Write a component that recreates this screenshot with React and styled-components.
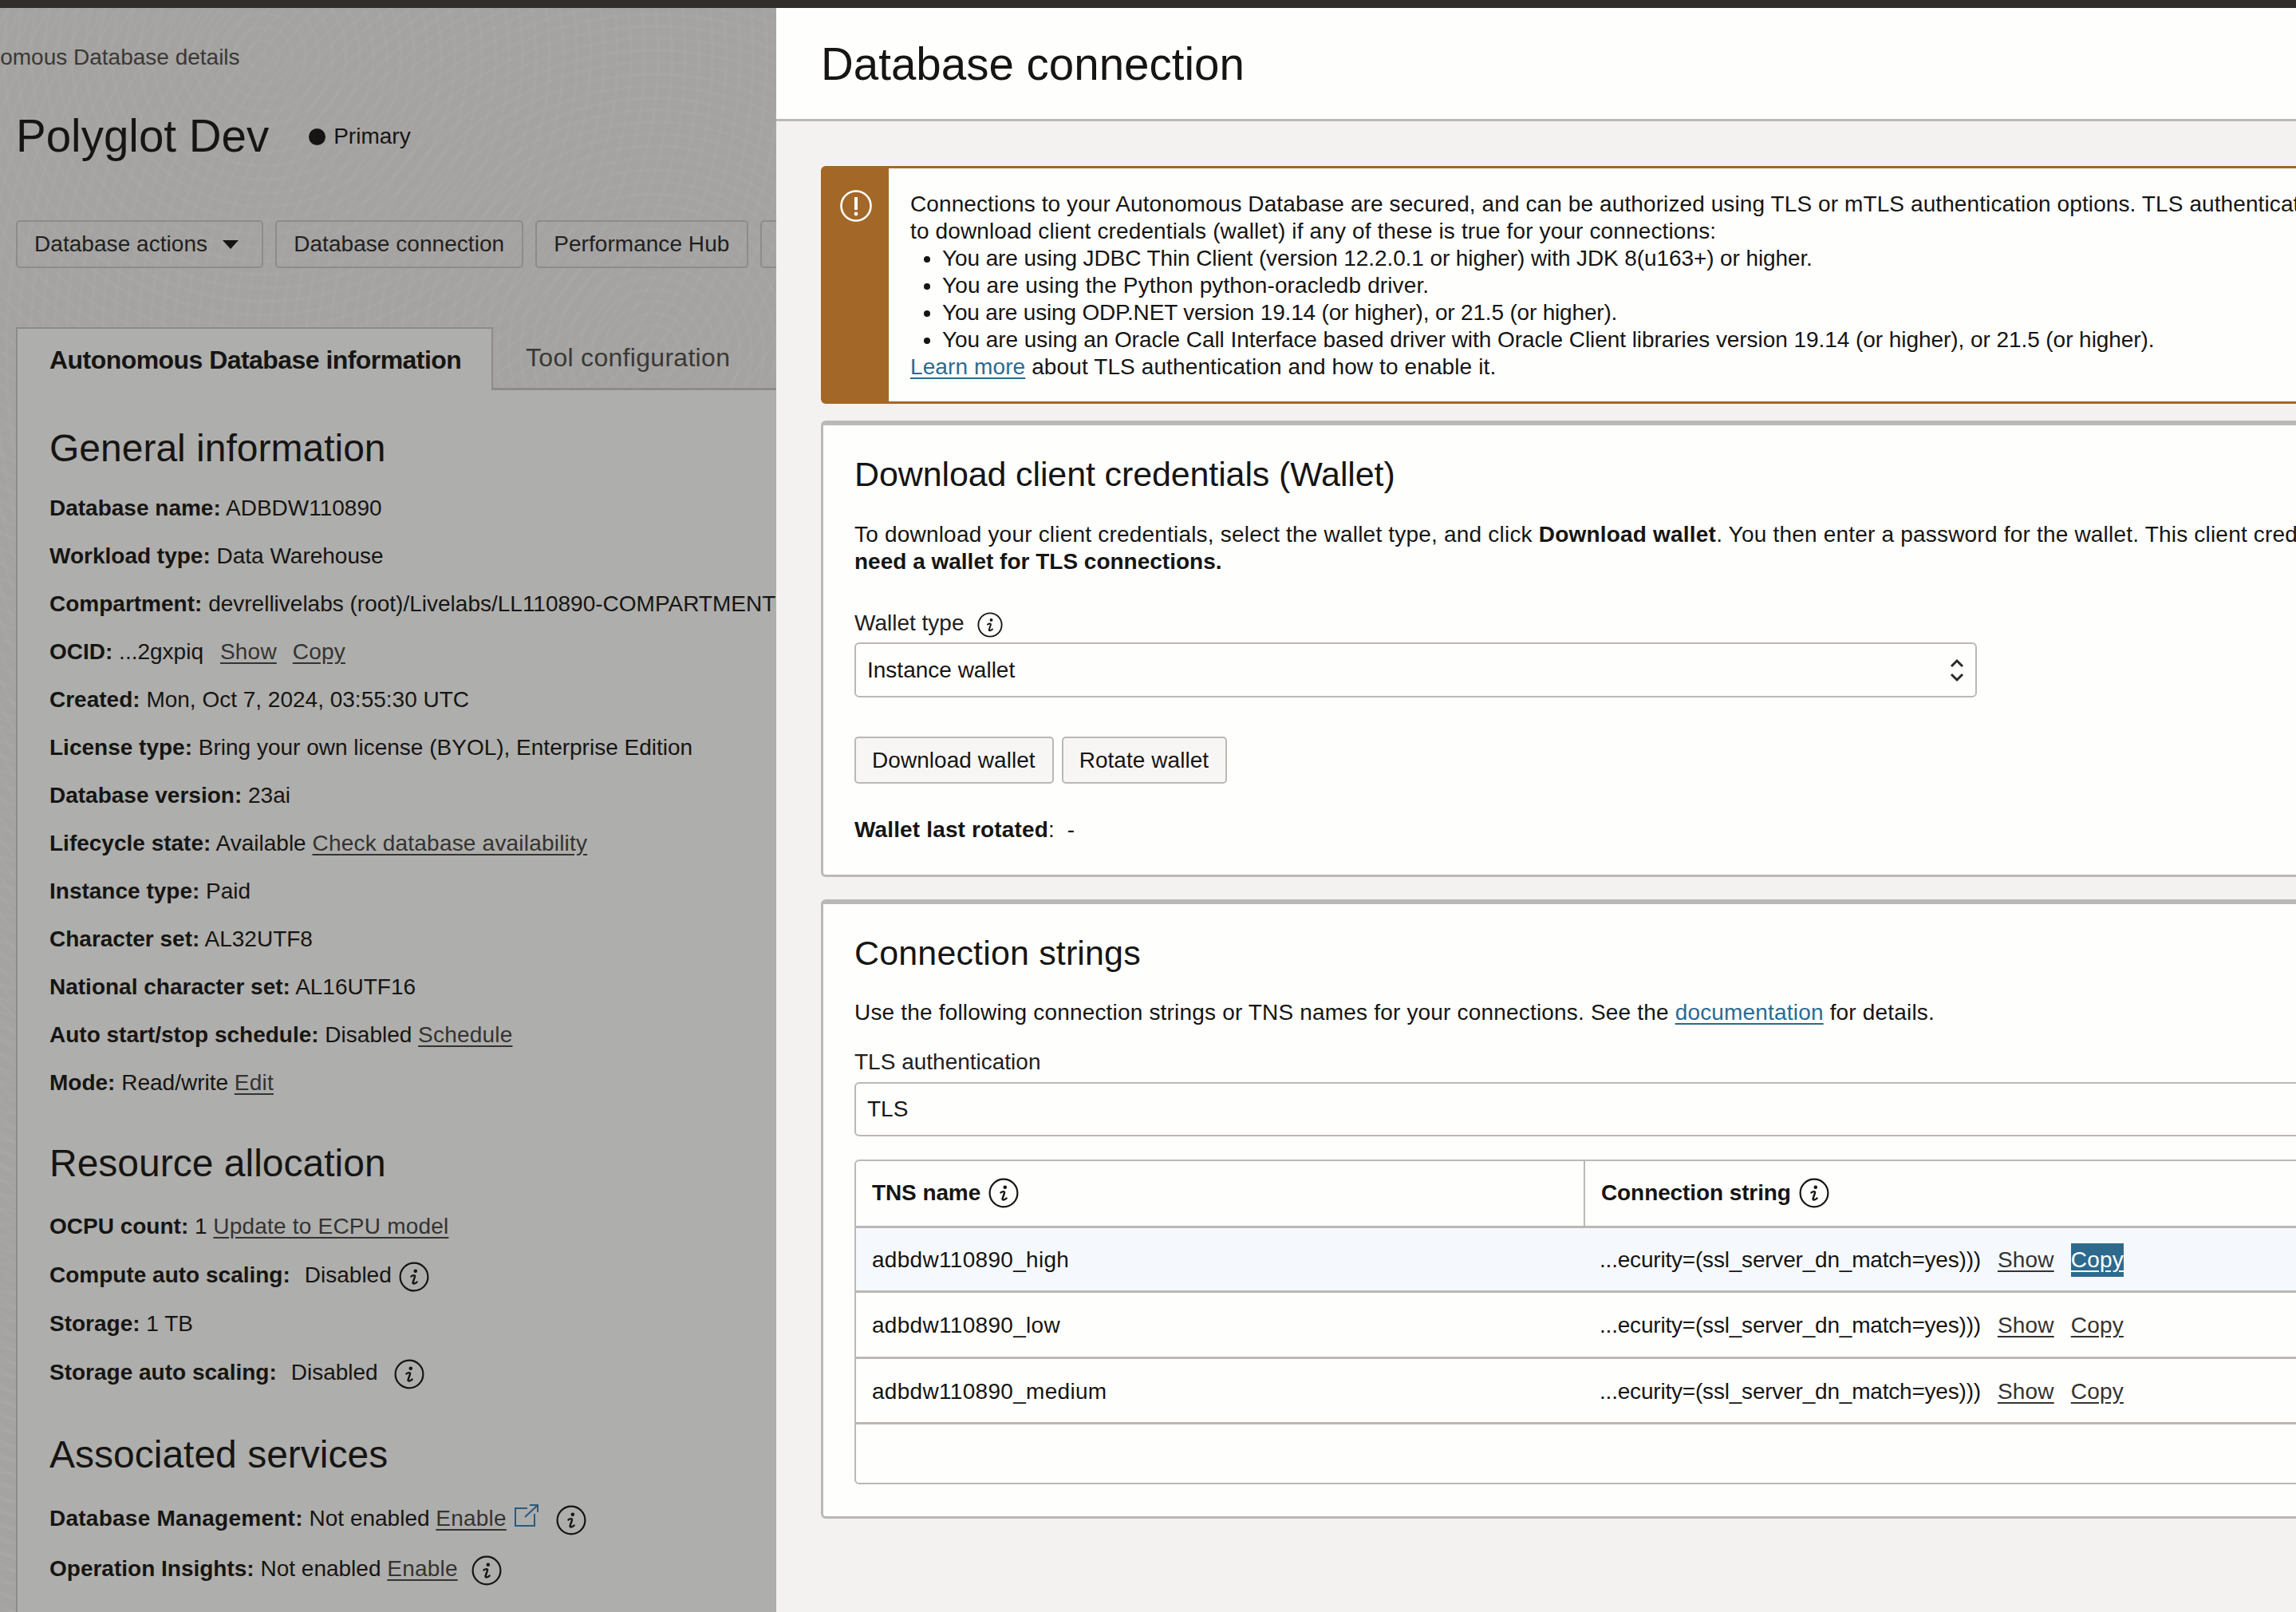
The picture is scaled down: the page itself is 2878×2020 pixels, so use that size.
import styled, { createGlobalStyle } from "styled-components";

const GlobalStyle = createGlobalStyle`
  html, body {
    margin: 0;
    padding: 0;
    background: #f3f2f1;
  }
  * {
    box-sizing: border-box;
  }
  body {
    font-family: "Liberation Sans", Arial, sans-serif;
    font-size: 28px;
    line-height: 34px;
    color: #161513;
  }
`;

const Page = styled.div`
  width: 2878px;
  height: 2020px;
  display: flex;
  flex-direction: column;
  overflow: hidden;
`;

const TopBar = styled.div`
  height: 10px;
  flex-shrink: 0;
  background: #312d2a;
`;

const Main = styled.div`
  flex: 1;
  display: flex;
  min-height: 0;
`;

/* dimmed page behind the drawer */
const Backdrop = styled.div`
  width: 973px;
  flex-shrink: 0;
  display: flex;
  flex-direction: column;
  overflow: hidden;
  padding-left: 20px;
  white-space: nowrap;
  background-color: #a6a5a3;
  background-image:
    repeating-radial-gradient(circle at 330px 60px, rgba(255, 255, 255, 0.014) 0 4px, rgba(0, 0, 0, 0.006) 4px 17px),
    repeating-radial-gradient(circle at 820px 430px, rgba(255, 255, 255, 0.012) 0 4px, rgba(0, 0, 0, 0.006) 4px 15px);
`;

const Breadcrumb = styled.div`
  margin: 45px 0 50px -93px;
  color: #3a3836;
`;

const TitleRow = styled.div`
  display: flex;
  align-items: center;
  height: 64px;
`;

const PageTitle = styled.h1`
  margin: 0;
  font-size: 56.5px;
  line-height: 64px;
  font-weight: 400;
`;

const StatusDot = styled.span`
  width: 21px;
  height: 21px;
  margin: 0 10px 0 50px;
  border-radius: 50%;
  background: #161513;
`;

const ActionBar = styled.div`
  display: flex;
  gap: 15px;
  margin-top: 73px;
`;

const ActionButton = styled.div`
  display: flex;
  align-items: center;
  flex-shrink: 0;
  height: 60px;
  padding: 0 22px 0 21px;
  letter-spacing: 0.05px;
  border: 2px solid #8e8c89;
  border-radius: 5px;
  color: #22201e;
`;

const Caret = styled.span`
  width: 0;
  height: 0;
  margin: 0 7px 0 19px;
  border-left: 10px solid transparent;
  border-right: 10px solid transparent;
  border-top: 11px solid #161513;
`;

const Tabs = styled.div`
  display: flex;
  height: 79px;
  margin-top: 74px;
  flex-shrink: 0;
`;

const ActiveTab = styled.div`
  width: 598px;
  padding: 22px 0 0 40px;
  font-size: 32px;
  font-weight: 700;
  letter-spacing: -0.55px;
  background: #aeaeac;
  border: 2px solid #8e8c89;
  border-bottom: 0;
`;

const Tab = styled.div`
  flex: 1;
  padding: 21px 0 0 41px;
  font-size: 32px;
  letter-spacing: 0.3px;
  color: #3a3836;
  border-bottom: 3px solid #8e8c89;
`;

const InfoPanel = styled.div`
  flex: 1;
  padding: 45px 0 0 40px;
  background: #aeaeac;
  border-left: 2px solid #8e8c89;
`;

const Section = styled.section`
  margin-bottom: ${(p) => p.$gap}px;
`;

const SectionTitle = styled.h2`
  margin: 0 0 ${(p) => p.$gap || 30}px;
  font-size: 48px;
  line-height: 56px;
  font-weight: 400;
`;

const Row = styled.div`
  height: 34px;
  margin-bottom: ${(p) => p.$gap || 26}px;
`;

const Value = styled.span`
  margin-left: ${(p) => p.$left || 0}px;
`;

const Tracked = styled.span`
  letter-spacing: ${(p) => p.$track}px;
`;

const PageLink = styled.a`
  margin-left: ${(p) => p.$left || 0}px;
  color: #353331;
  letter-spacing: 0.2px;
  text-decoration: underline;
  text-underline-offset: 4px;
`;

const IconSvg = styled.svg`
  width: ${(p) => p.$size}px;
  height: ${(p) => p.$size}px;
  margin: -6px 0 -6px ${(p) => p.$left || 0}px;
  vertical-align: ${(p) => p.$align || "middle"};
  flex-shrink: 0;
`;

const Drawer = styled.div`
  flex: 1;
  min-width: 0;
  overflow: hidden;
  background: #f3f2f1;
`;

const DrawerHeader = styled.div`
  display: flex;
  align-items: center;
  height: 142px;
  padding: 2px 0 0 56px;
  background: #fefefd;
  border-bottom: 3px solid #bcb8b3;
`;

const DrawerTitle = styled.h1`
  margin: 0;
  font-size: 56.5px;
  line-height: 64px;
  font-weight: 400;
`;

const DrawerBody = styled.div`
  width: 2500px;
  padding: 56px 0 0 56px;
  white-space: nowrap;
`;

const Alert = styled.div`
  display: flex;
  height: 298px;
  margin-bottom: 21px;
  background: #fefefd;
  border: 3px solid #a36728;
  border-radius: 6px;
`;

const AlertIcon = styled.div`
  width: 82px;
  flex-shrink: 0;
  display: flex;
  justify-content: center;
  padding: 27px 1px 0 0;
  background: #a36728;
`;

const AlertText = styled.div`
  padding: 28px 0 0 27px;
`;

const AlertList = styled.ul`
  margin: 0;
  padding: 0 0 0 40px;
`;

const BlueLink = styled.a`
  color: #2b6b91;
  text-decoration: underline;
  text-underline-offset: 4px;
`;

const Card = styled.section`
  margin-bottom: ${(p) => p.$gap || 0}px;
  padding: 36px 0 ${(p) => p.$bottom}px 39px;
  background: #fefefd;
  border: 3px solid #bcb8b3;
  border-top-width: 6px;
  border-radius: 6px;
`;

const CardTitle = styled.h2`
  margin: 0;
  font-size: 43px;
  line-height: 50px;
  font-weight: 400;
  letter-spacing: ${(p) => p.$track}px;
`;

const Paragraph = styled.p`
  margin: ${(p) => p.$top}px 0 0;
`;

const FieldLabel = styled.div`
  margin-top: ${(p) => p.$top}px;
  color: #22201e;
`;

const Field = styled.div`
  display: flex;
  align-items: center;
  justify-content: space-between;
  width: ${(p) => p.$width || "100%"};
  height: ${(p) => p.$height}px;
  margin-top: ${(p) => p.$top}px;
  padding: 0 14px;
  background: #fefefd;
  border: 2px solid #bcb8b3;
  border-radius: 6px;
`;

const ButtonRow = styled.div`
  display: flex;
  gap: 10px;
  margin-top: 49px;
`;

const Button = styled.div`
  display: flex;
  align-items: center;
  height: 59px;
  padding: 0 21px 0 20px;
  letter-spacing: 0.05px;
  background: #f7f6f5;
  border: 2px solid #bcb8b3;
  border-radius: 5px;
`;

const RotatedLine = styled.div`
  margin-top: 41px;
  letter-spacing: 0.15px;
`;

const Table = styled.div`
  margin-top: 29px;
  height: 407px;
  border: 2px solid #bcb8b3;
  border-radius: 6px;
`;

const TableRow = styled.div`
  display: grid;
  grid-template-columns: 912px 1fr;
  height: ${(p) => p.$height}px;
  background: ${(p) => (p.$active ? "#f5f9fe" : "transparent")};
  border-bottom: 3px solid #bcb8b3;
`;

const HeadCell = styled.div`
  display: flex;
  align-items: center;
  gap: 10px;
  padding: 0 0 2px 20px;
  font-weight: 700;
  letter-spacing: -0.1px;
  & + & {
    border-left: 2px solid #bcb8b3;
  }
`;

const Cell = styled.div`
  display: flex;
  align-items: center;
  padding: 2px 0 0 ${(p) => p.$left}px;
  letter-spacing: ${(p) => p.$track}px;
`;

const CellLink = styled.a`
  margin-left: 21px;
  letter-spacing: 0.2px;
  color: ${(p) => (p.$selected ? "#ffffff" : "#353331")};
  background: ${(p) => (p.$selected ? "#2e6a8e" : "transparent")};
  padding: ${(p) => (p.$selected ? "4px 0" : "0")};
  text-decoration: underline;
  text-underline-offset: 4px;
`;

function InfoIcon({ size = 38, left }) {
  return (
    <IconSvg viewBox="0 0 38 38" $size={size} $left={left} fill="none" stroke="#161513">
      <circle cx="19" cy="19" r="17.4" strokeWidth="2.2" />
      <circle cx="20.8" cy="11.8" r="2.3" fill="#161513" stroke="none" />
      <path
        d="M15.5 18.4C17.5 16.8 20.6 16.4 20 19L17.6 25.8C17 28.2 19.8 28 22.6 25.6"
        strokeWidth="2.4"
        strokeLinecap="round"
      />
    </IconSvg>
  );
}

function ExternalIcon() {
  return (
    <IconSvg viewBox="0 0 32 30" $size={32} $left={9} $align="3px" fill="none" stroke="#2b5a7c" strokeWidth="2">
      <path d="M17 6H2V28H26V13" />
      <path d="M14 17L30 2M20 2H30V11" />
    </IconSvg>
  );
}

function SelectChevrons() {
  return (
    <svg width="18" height="30" viewBox="0 0 18 30" fill="none" stroke="#2c2a28" strokeWidth="3">
      <path d="M2 10L9 3L16 10" />
      <path d="M2 20L9 27L16 20" />
    </svg>
  );
}

const generalRows = [
  ["Database name:", "ADBDW110890"],
  ["Workload type:", "Data Warehouse"],
  ["Compartment:", "devrellivelabs (root)/Livelabs/LL110890-COMPARTMENT"],
];

const plainRows = [
  ["Created:", "Mon, Oct 7, 2024, 03:55:30 UTC"],
  ["License type:", "Bring your own license (BYOL), Enterprise Edition"],
  ["Database version:", "23ai"],
];

const instanceRows = [
  ["Instance type:", "Paid"],
  ["Character set:", "AL32UTF8"],
  ["National character set:", "AL16UTF16"],
];

const tnsNames = ["adbdw110890_high", "adbdw110890_low", "adbdw110890_medium"];
const rowHeights = [81, 83, 82];

function DetailRow({ label, children }) {
  return (
    <Row>
      <b>{label}</b> {children}
    </Row>
  );
}

export default function App() {
  return (
    <Page>
      <GlobalStyle />
      <TopBar />
      <Main>
        <Backdrop>
          <Breadcrumb>Autonomous Database details</Breadcrumb>
          <TitleRow>
            <PageTitle>Polyglot Dev</PageTitle>
            <StatusDot />
            Primary
          </TitleRow>
          <ActionBar>
            <ActionButton>
              Database actions
              <Caret />
            </ActionButton>
            <ActionButton>Database connection</ActionButton>
            <ActionButton>Performance Hub</ActionButton>
            <ActionButton>Manage resource allocation</ActionButton>
          </ActionBar>
          <Tabs>
            <ActiveTab>Autonomous Database information</ActiveTab>
            <Tab>Tool configuration</Tab>
          </Tabs>
          <InfoPanel>
            <Section $gap={56}>
              <SectionTitle>General information</SectionTitle>
              {generalRows.map(([label, value]) => (
                <DetailRow key={label} label={label}>
                  {value}
                </DetailRow>
              ))}
              <Row>
                <b>OCID:</b> ...2gxpiq
                <PageLink $left={21}>Show</PageLink>
                <PageLink $left={20}>Copy</PageLink>
              </Row>
              {plainRows.map(([label, value]) => (
                <DetailRow key={label} label={label}>
                  {value}
                </DetailRow>
              ))}
              <Row>
                <b>Lifecycle state:</b> Available <PageLink>Check database availability</PageLink>
              </Row>
              {instanceRows.map(([label, value]) => (
                <DetailRow key={label} label={label}>
                  {value}
                </DetailRow>
              ))}
              <Row>
                <b>Auto start/stop schedule:</b> Disabled <PageLink>Schedule</PageLink>
              </Row>
              <Row>
                <b>Mode:</b> Read/write <PageLink>Edit</PageLink>
              </Row>
            </Section>
            <Section $gap={58}>
              <SectionTitle $gap={34}>Resource allocation</SectionTitle>
              <Row $gap={27}>
                <b>OCPU count:</b> 1 <PageLink>Update to ECPU model</PageLink>
              </Row>
              <Row $gap={27}>
                <b>Compute auto scaling:</b>
                <Value $left={18}>Disabled</Value>
                <InfoIcon left={9} />
              </Row>
              <Row $gap={27}>
                <b>Storage:</b> 1 TB
              </Row>
              <Row $gap={27}>
                <b>Storage auto scaling:</b>
                <Value $left={18}>Disabled</Value>
                <InfoIcon left={20} />
              </Row>
            </Section>
            <Section $gap={0}>
              <SectionTitle $gap={35}>Associated services</SectionTitle>
              <Row $gap={29}>
                <Tracked $track={0.25}>
                  <b>Database Management:</b>
                </Tracked>{" "}
                Not enabled <PageLink>Enable</PageLink>
                <ExternalIcon />
                <InfoIcon left={21} />
              </Row>
              <Row>
                <b>Operation Insights:</b> Not enabled <PageLink>Enable</PageLink>
                <InfoIcon left={17} />
              </Row>
            </Section>
          </InfoPanel>
        </Backdrop>
        <Drawer>
          <DrawerHeader>
            <DrawerTitle>Database connection</DrawerTitle>
          </DrawerHeader>
          <DrawerBody>
            <Alert>
              <AlertIcon>
                <svg width="40" height="40" viewBox="0 0 40 40" fill="none" stroke="#ffffff">
                  <circle cx="20" cy="20" r="18.5" strokeWidth="2.6" />
                  <path d="M20 9V25" strokeWidth="4" />
                  <circle cx="20" cy="30" r="2.4" fill="#ffffff" stroke="none" />
                </svg>
              </AlertIcon>
              <AlertText>
                <Tracked $track={0.1}>
                  Connections to your Autonomous Database are secured, and can be authorized using TLS or mTLS
                  authentication options. TLS authentication does not require you
                </Tracked>
                <br />
                <Tracked $track={0.13}>
                  to download client credentials (wallet) if any of these is true for your connections:
                </Tracked>
                <AlertList>
                  <li>
                    <Tracked $track={-0.1}>
                      You are using JDBC Thin Client (version 12.2.0.1 or higher) with JDK 8(u163+) or higher.
                    </Tracked>
                  </li>
                  <li>
                    <Tracked $track={0.12}>You are using the Python python-oracledb driver.</Tracked>
                  </li>
                  <li>
                    <Tracked $track={-0.18}>You are using ODP.NET version 19.14 (or higher), or 21.5 (or higher).</Tracked>
                  </li>
                  <li>
                    <Tracked $track={-0.06}>
                      You are using an Oracle Call Interface based driver with Oracle Client libraries version 19.14 (or
                      higher), or 21.5 (or higher).
                    </Tracked>
                  </li>
                </AlertList>
                <Tracked $track={0.11}>
                  <BlueLink>Learn more</BlueLink> about TLS authentication and how to enable it.
                </Tracked>
              </AlertText>
            </Alert>

            <Card $gap={28} $bottom={39}>
              <CardTitle $track={-0.12}>Download client credentials (Wallet)</CardTitle>
              <Paragraph $top={34}>
                <Tracked $track={0.2}>
                  To download your client credentials, select the wallet type, and click <b>Download wallet</b>. You then
                  enter a password for the wallet. This client credentials file is required for mTLS.
                </Tracked>
                <br />
                <b>need a wallet for TLS connections.</b>
              </Paragraph>
              <FieldLabel $top={43}>
                Wallet type
                <InfoIcon size={32} left={17} />
              </FieldLabel>
              <Field $width="1407px" $height={69} $top={7}>
                Instance wallet
                <SelectChevrons />
              </Field>
              <ButtonRow>
                <Button>Download wallet</Button>
                <Button>Rotate wallet</Button>
              </ButtonRow>
              <RotatedLine>
                <b>Wallet last rotated</b>:&nbsp; -
              </RotatedLine>
            </Card>

            <Card $bottom={40}>
              <CardTitle $track={0.15}>Connection strings</CardTitle>
              <Paragraph $top={33}>
                <Tracked $track={0.18}>
                  Use the following connection strings or TNS names for your connections. See the{" "}
                  <BlueLink>documentation</BlueLink> for details.
                </Tracked>
              </Paragraph>
              <FieldLabel $top={28}>TLS authentication</FieldLabel>
              <Field $height={68} $top={8}>
                TLS
              </Field>
              <Table>
                <TableRow $height={84}>
                  <HeadCell>
                    TNS name
                    <InfoIcon />
                  </HeadCell>
                  <HeadCell>
                    Connection string
                    <InfoIcon />
                  </HeadCell>
                </TableRow>
                {tnsNames.map((name, i) => (
                  <TableRow key={name} $height={rowHeights[i]} $active={i === 0}>
                    <Cell $left={20} $track={0.3}>
                      {name}
                    </Cell>
                    <Cell $left={20} $track={-0.2}>
                      ...ecurity=(ssl_server_dn_match=yes)))
                      <CellLink>Show</CellLink>
                      <CellLink $selected={i === 0}>Copy</CellLink>
                    </Cell>
                  </TableRow>
                ))}
              </Table>
            </Card>
          </DrawerBody>
        </Drawer>
      </Main>
    </Page>
  );
}
